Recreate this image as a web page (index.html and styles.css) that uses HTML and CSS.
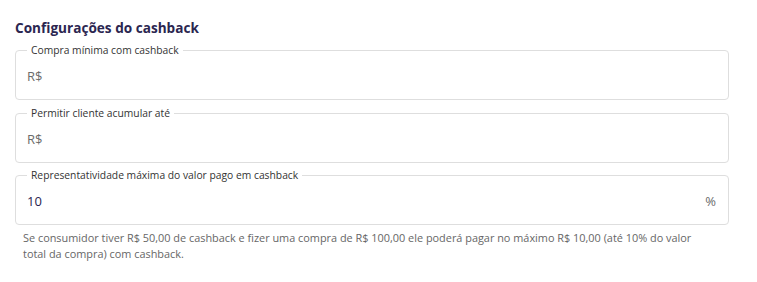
FILE: index.html
```html
<!DOCTYPE html>
<html lang="pt-BR">
<head>
    <meta charset="UTF-8">
    <meta name="viewport" content="width=device-width, initial-scale=1.0">
    <title>Configurações do cashback</title>
    <link rel="stylesheet" href="styles.css">
</head>
<body>
    <div class="panel">
        <h2 class="title">Configurações do cashback</h2>

        <fieldset class="field">
            <legend class="field-label">Compra mínima com cashback</legend>
            <div class="field-row">
                <span class="prefix">R$</span>
                <input type="text" class="field-input">
            </div>
        </fieldset>

        <fieldset class="field">
            <legend class="field-label">Permitir cliente acumular até</legend>
            <div class="field-row">
                <span class="prefix">R$</span>
                <input type="text" class="field-input">
            </div>
        </fieldset>

        <fieldset class="field">
            <legend class="field-label">Representatividade máxima do valor pago em cashback</legend>
            <div class="field-row">
                <input type="text" class="field-input filled" value="10">
                <span class="suffix">%</span>
            </div>
        </fieldset>

        <p class="helper">Se consumidor tiver R$ 50,00 de cashback e fizer uma compra de R$ 100,00 ele poderá pagar no máximo R$ 10,00 (até 10% do valor total da compra) com cashback.</p>
    </div>
</body>
</html>
```

FILE: styles.css
```css
body {
    margin: 0;
    font-family: "Open Sans", Arial, sans-serif;
    background: #fff;
}

.panel {
    padding: 19px 28px 0 15px;
}

.title {
    margin: 0 0 7px;
    font-size: 13.6px;
    line-height: 18px;
    font-weight: 700;
    color: #2b2650;
}

.field {
    margin: 0 0 7px;
    padding: 0 12px 0 11px;
    border: 1px solid #dedede;
    border-radius: 4px;
}

.field:last-of-type {
    margin-top: -1px;
}

.field-label {
    padding: 0 4px;
    font-size: 10.3px;
    line-height: 12px;
    color: #333;
}

.field-row {
    display: flex;
    align-items: center;
    height: 43px;
    padding-bottom: 3px;
    box-sizing: border-box;
}

.prefix,
.suffix {
    font-size: 13px;
    color: #6b6b6b;
}

.prefix {
    margin-right: 4px;
}

.field-input {
    flex: 1;
    min-width: 0;
    border: none;
    outline: none;
    padding: 0;
    font-family: inherit;
    font-size: 13px;
    background: transparent;
}

.field-input.filled {
    color: #2b2350;
}

.helper {
    max-width: 686px;
    margin: -2px 0 0;
    padding: 0 8px;
    font-size: 10.9px;
    line-height: 16px;
    color: #666;
}
```
